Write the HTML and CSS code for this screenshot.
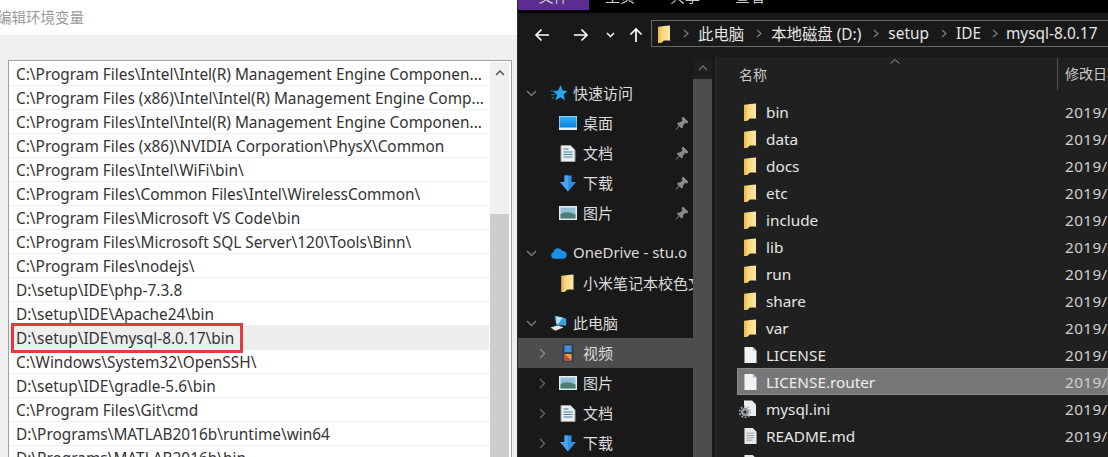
FILE: index.html
```html
<!DOCTYPE html>
<html lang="zh">
<head>
<meta charset="utf-8">
<title>编辑环境变量</title>
<link rel="stylesheet" href="styles.css">
</head>
<body>
<svg class="defs" width="0" height="0" aria-hidden="true">
  <defs>
    <linearGradient id="fg" x1="0" y1="0" x2="1" y2="0"><stop offset="0" stop-color="#f5cf66"/><stop offset="1" stop-color="#fce9b2"/></linearGradient>
    <linearGradient id="lg" x1="0" y1="0" x2="0" y2="1"><stop offset="0" stop-color="#2fb4f5"/><stop offset="1" stop-color="#0a7fe0"/></linearGradient>
    <symbol id="folder" viewBox="0 0 13 18"><path d="M0 2 L6 1 L12 0.5 V15 L13 15.5 H6 L3 18 H0 Z" fill="url(#fg)"/><path d="M0 2 L2.5 1.6 V18 H0 Z" fill="#eec04a"/></symbol>
    <symbol id="file" viewBox="0 0 14 18"><path d="M0.5 0.5 H9.5 L13.5 4.5 V17.5 H0.5 Z" fill="#f2f2f2"/><path d="M9.5 0.5 L13.5 4.5 H9.5 Z" fill="#c4c4c4"/></symbol>
    <symbol id="text" viewBox="0 0 14 18"><path d="M0.5 0.5 H9.5 L13.5 4.5 V17.5 H0.5 Z" fill="#e8e8e8"/><path d="M2.5 6 H11 M2.5 8.5 H11 M2.5 11 H11 M2.5 13.5 H9" stroke="#9a9a9a"/></symbol>
    <symbol id="ini" viewBox="0 0 18 18"><path d="M5 0.5 H13 L17 4.5 V16 H5 Z" fill="#ececec"/><circle cx="6" cy="12" r="4.2" fill="#8f969c"/><circle cx="6" cy="12" r="5.4" fill="none" stroke="#a9aeb2" stroke-width="1.6" stroke-dasharray="1.7 1.7"/><circle cx="6" cy="12" r="1.6" fill="#2a2a2a"/></symbol>
    <symbol id="pin" viewBox="0 0 14 14"><path d="M8 1 L13 6 L11.5 7 L10 6.5 L7.5 9.5 L7.5 11.5 L6.5 12 L2.5 8 L3 7 L5 7 L8 4.5 L7 3 Z M4 10 L1 13.5" fill="#8a8a8a" stroke="#8a8a8a"/></symbol>
    <symbol id="desk" viewBox="0 0 18 14"><rect width="18" height="14" fill="#e4eef5"/><rect x="0.5" y="0.5" width="17" height="11" fill="url(#lg)"/></symbol>
    <symbol id="doc" viewBox="0 0 15 17"><path d="M0.5 0.5 H10 L14.5 5 V16.5 H0.5 Z" fill="#ededed" stroke="#9aa4ab"/><path d="M3 4 H8 M3 7 H12 M3 9.5 H12 M3 12 H12" stroke="#3f7fa8"/></symbol>
    <symbol id="down" viewBox="0 0 17 17"><path d="M5 0.5 H12 V7 H16.5 L8.5 16.5 L0.5 7 H5 Z" fill="#2f8fe6"/><path d="M5 0.5 H8.5 V16.5 L0.5 7 H5 Z" fill="#4aa5f0"/></symbol>
    <symbol id="pic" viewBox="0 0 18 14"><rect width="18" height="14" fill="#e6ecf0"/><rect x="1.5" y="1.5" width="15" height="11" fill="#8fc0d8"/><path d="M1.5 8 Q8 4.5 16.5 8.5 V12.5 H1.5 Z" fill="#4f7f73"/></symbol>
    <symbol id="video" viewBox="0 0 12 18"><rect width="12" height="18" fill="#39424c"/><rect x="2.5" y="1.5" width="7" height="6.5" fill="#3f8fd8"/><rect x="2.5" y="10" width="7" height="6.5" fill="#e8a03a"/><path d="M2.5 10 L9.5 16.5 H2.5 Z" fill="#c8473f"/></symbol>
    <symbol id="star" viewBox="0 0 18 18"><path d="M10.5 1 L12.7 6.5 L17.5 7 L13.7 10.6 L15 16.5 L10.5 13.3 L5.5 16.5 L7 10.8 L3 7.3 L8.3 6.6 Z" fill="#2ba3ef"/><path d="M0.5 7 H5 M1 10.5 H4.5 M1.5 14 H4.5" stroke="#1c6fb5"/></symbol>
    <symbol id="cloud" viewBox="0 0 21 13"><path d="M4.5 12.5 A4 4 0 0 1 4 4.8 A5.6 5.6 0 0 1 14.5 3.6 A4.6 4.6 0 0 1 16.5 12.5 Z" fill="#1a8fe3"/></symbol>
    <symbol id="pc" viewBox="0 0 20 18"><path d="M5 1 L18 4 V12 L7 11 Z" fill="#3fa2e0"/><path d="M7 1.5 L14 3 L9 10 L7 9.5 Z" fill="#bfe3f5"/><path d="M0.5 14 L9 11.5 L15 14 L6 17.5 Z" fill="#dfe5ea"/></symbol>
  </defs>
</svg>

<main class="screen">
  <section class="editor">
    <h1 class="editor-title">编辑环境变量</h1>
    <div class="editor-body">
      <div class="path-box">
        <ul class="path-list">
          <li class="path-row">C:\Program Files\Intel\Intel(R) Management Engine Componen...</li>
          <li class="path-row">C:\Program Files (x86)\Intel\Intel(R) Management Engine Comp...</li>
          <li class="path-row">C:\Program Files\Intel\Intel(R) Management Engine Componen...</li>
          <li class="path-row">C:\Program Files (x86)\NVIDIA Corporation\PhysX\Common</li>
          <li class="path-row">C:\Program Files\Intel\WiFi\bin\</li>
          <li class="path-row">C:\Program Files\Common Files\Intel\WirelessCommon\</li>
          <li class="path-row">C:\Program Files\Microsoft VS Code\bin</li>
          <li class="path-row">C:\Program Files\Microsoft SQL Server\120\Tools\Binn\</li>
          <li class="path-row">C:\Program Files\nodejs\</li>
          <li class="path-row">D:\setup\IDE\php-7.3.8</li>
          <li class="path-row">D:\setup\IDE\Apache24\bin</li>
          <li class="path-row is-selected">D:\setup\IDE\mysql-8.0.17\bin<span class="red-mark"></span></li>
          <li class="path-row">C:\Windows\System32\OpenSSH\</li>
          <li class="path-row">D:\setup\IDE\gradle-5.6\bin</li>
          <li class="path-row">C:\Program Files\Git\cmd</li>
          <li class="path-row">D:\Programs\MATLAB2016b\runtime\win64</li>
          <li class="path-row">D:\Programs\MATLAB2016b\bin</li>
        </ul>
        <div class="list-scroll">
          <svg class="list-up" width="10" height="6" viewBox="0 0 10 6"><path d="M1 5 L5 1 L9 5" fill="none" stroke="#555" stroke-width="1.5"/></svg>
          <div class="list-thumb"></div>
        </div>
      </div>
    </div>
  </section>

  <section class="explorer">
    <div class="ribbon">
      <span class="tab tab-file">文件</span>
      <span class="tab tab-home">主页</span>
      <span class="tab tab-share">共享</span>
      <span class="tab tab-view">查看</span>
    </div>
    <div class="toolbar">
      <svg class="nav-back" width="16" height="14" viewBox="0 0 16 14"><path d="M15 7 H2 M7.5 1.5 L2 7 L7.5 12.5" fill="none" stroke="#fff" stroke-width="1.7"/></svg>
      <svg class="nav-fwd" width="16" height="14" viewBox="0 0 16 14"><path d="M1 7 H14 M8.5 1.5 L14 7 L8.5 12.5" fill="none" stroke="#fff" stroke-width="1.7"/></svg>
      <svg class="nav-drop" width="9" height="6" viewBox="0 0 9 6"><path d="M1 1 L4.5 4.5 L8 1" fill="none" stroke="#eee" stroke-width="1.6"/></svg>
      <svg class="nav-up" width="14" height="16" viewBox="0 0 14 16"><path d="M7 15 V2 M1.5 7.5 L7 2 L12.5 7.5" fill="none" stroke="#fff" stroke-width="1.7"/></svg>
      <div class="address">
        <svg class="addr-folder" width="13" height="18"><use href="#folder"/></svg>
        <svg class="crumb-sep" width="6" height="9" viewBox="0 0 6 9"><path d="M1 1 L5 4.5 L1 8" fill="none" stroke="#777" stroke-width="1.4"/></svg>
        <span class="crumb">此电脑</span>
        <svg class="crumb-sep" width="6" height="9" viewBox="0 0 6 9"><path d="M1 1 L5 4.5 L1 8" fill="none" stroke="#777" stroke-width="1.4"/></svg>
        <span class="crumb">本地磁盘 (D:)</span>
        <svg class="crumb-sep" width="6" height="9" viewBox="0 0 6 9"><path d="M1 1 L5 4.5 L1 8" fill="none" stroke="#777" stroke-width="1.4"/></svg>
        <span class="crumb">setup</span>
        <svg class="crumb-sep" width="6" height="9" viewBox="0 0 6 9"><path d="M1 1 L5 4.5 L1 8" fill="none" stroke="#777" stroke-width="1.4"/></svg>
        <span class="crumb">IDE</span>
        <svg class="crumb-sep crumb-sep-last" width="6" height="9" viewBox="0 0 6 9"><path d="M1 1 L5 4.5 L1 8" fill="none" stroke="#777" stroke-width="1.4"/></svg>
        <span class="crumb">mysql-8.0.17</span>
      </div>
    </div>
    <div class="panes">
      <nav class="tree">
        <div class="tree-row top"><svg class="tw" width="11" height="7" viewBox="0 0 11 7"><path d="M1 1 L5.5 5.5 L10 1" fill="none" stroke="#777" stroke-width="1.5"/></svg><svg class="ti" width="18" height="18"><use href="#star"/></svg><span>快速访问</span></div>
        <div class="tree-row child"><svg class="ti" width="18" height="14"><use href="#desk"/></svg><span>桌面</span><svg class="pin" width="14" height="14"><use href="#pin"/></svg></div>
        <div class="tree-row child"><svg class="ti" width="18" height="17"><use href="#doc"/></svg><span>文档</span><svg class="pin" width="14" height="14"><use href="#pin"/></svg></div>
        <div class="tree-row child"><svg class="ti" width="18" height="17"><use href="#down"/></svg><span>下载</span><svg class="pin" width="14" height="14"><use href="#pin"/></svg></div>
        <div class="tree-row child"><svg class="ti" width="18" height="14"><use href="#pic"/></svg><span>图片</span><svg class="pin" width="14" height="14"><use href="#pin"/></svg></div>
        <div class="tree-row top gap"><svg class="tw" width="11" height="7" viewBox="0 0 11 7"><path d="M1 1 L5.5 5.5 L10 1" fill="none" stroke="#777" stroke-width="1.5"/></svg><svg class="ti" width="21" height="13"><use href="#cloud"/></svg><span>OneDrive - stu.o</span></div>
        <div class="tree-row child"><svg class="ti" width="18" height="18"><use href="#folder"/></svg><span>小米笔记本校色文件</span></div>
        <div class="tree-row top gap"><svg class="tw" width="11" height="7" viewBox="0 0 11 7"><path d="M1 1 L5.5 5.5 L10 1" fill="none" stroke="#777" stroke-width="1.5"/></svg><svg class="ti" width="20" height="18"><use href="#pc"/></svg><span>此电脑</span></div>
        <div class="tree-row child has-arrow is-active"><svg class="tw" width="7" height="11" viewBox="0 0 7 11"><path d="M1 1 L5.5 5.5 L1 10" fill="none" stroke="#8a8a8a" stroke-width="1.4"/></svg><svg class="ti" width="18" height="18"><use href="#video"/></svg><span>视频</span></div>
        <div class="tree-row child has-arrow"><svg class="tw" width="7" height="11" viewBox="0 0 7 11"><path d="M1 1 L5.5 5.5 L1 10" fill="none" stroke="#666" stroke-width="1.4"/></svg><svg class="ti" width="18" height="14"><use href="#pic"/></svg><span>图片</span></div>
        <div class="tree-row child has-arrow"><svg class="tw" width="7" height="11" viewBox="0 0 7 11"><path d="M1 1 L5.5 5.5 L1 10" fill="none" stroke="#666" stroke-width="1.4"/></svg><svg class="ti" width="18" height="17"><use href="#doc"/></svg><span>文档</span></div>
        <div class="tree-row child has-arrow"><svg class="tw" width="7" height="11" viewBox="0 0 7 11"><path d="M1 1 L5.5 5.5 L1 10" fill="none" stroke="#666" stroke-width="1.4"/></svg><svg class="ti" width="18" height="17"><use href="#down"/></svg><span>下载</span></div>
      </nav>
      <div class="tree-scroll">
        <svg class="tree-up" width="10" height="6" viewBox="0 0 10 6"><path d="M1 5 L5 1 L9 5" fill="none" stroke="#666" stroke-width="1.6"/></svg>
        <div class="tree-thumb"></div>
      </div>
      <div class="files">
        <div class="file-head">
          <span class="col-name">名称</span>
          <svg class="sort" width="10" height="5" viewBox="0 0 10 5"><path d="M0.5 4.5 L5 0.5 L9.5 4.5" fill="none" stroke="#999"/></svg>
          <span class="col-date">修改日期</span>
        </div>
        <div class="file-row"><svg class="fi" width="13" height="18"><use href="#folder"/></svg><span class="fn">bin</span><span class="fd">2019/7/21</span></div>
        <div class="file-row"><svg class="fi" width="13" height="18"><use href="#folder"/></svg><span class="fn">data</span><span class="fd">2019/7/21</span></div>
        <div class="file-row"><svg class="fi" width="13" height="18"><use href="#folder"/></svg><span class="fn">docs</span><span class="fd">2019/7/21</span></div>
        <div class="file-row"><svg class="fi" width="13" height="18"><use href="#folder"/></svg><span class="fn">etc</span><span class="fd">2019/7/21</span></div>
        <div class="file-row"><svg class="fi" width="13" height="18"><use href="#folder"/></svg><span class="fn">include</span><span class="fd">2019/7/21</span></div>
        <div class="file-row"><svg class="fi" width="13" height="18"><use href="#folder"/></svg><span class="fn">lib</span><span class="fd">2019/7/21</span></div>
        <div class="file-row"><svg class="fi" width="13" height="18"><use href="#folder"/></svg><span class="fn">run</span><span class="fd">2019/7/21</span></div>
        <div class="file-row"><svg class="fi" width="13" height="18"><use href="#folder"/></svg><span class="fn">share</span><span class="fd">2019/7/21</span></div>
        <div class="file-row"><svg class="fi" width="13" height="18"><use href="#folder"/></svg><span class="fn">var</span><span class="fd">2019/7/21</span></div>
        <div class="file-row"><svg class="fi" width="13" height="18"><use href="#file"/></svg><span class="fn">LICENSE</span><span class="fd">2019/6/27</span></div>
        <div class="file-row is-selected"><svg class="fi" width="13" height="18"><use href="#file"/></svg><span class="fn">LICENSE.router</span><span class="fd">2019/6/27</span></div>
        <div class="file-row"><svg class="fi fi-ini" width="18" height="18"><use href="#ini"/></svg><span class="fn">mysql.ini</span><span class="fd">2019/7/21</span></div>
        <div class="file-row"><svg class="fi" width="13" height="18"><use href="#text"/></svg><span class="fn">README.md</span><span class="fd">2019/6/27</span></div>
        <div class="file-row"><svg class="fi" width="13" height="18"><use href="#text"/></svg><span class="fn">README.router</span><span class="fd">2019/6/27</span></div>
      </div>
    </div>
  </section>
</main>
</body>
</html>
```
FILE: styles.css
```css
* { box-sizing: border-box; }
html, body { margin: 0; padding: 0; height: 100%; overflow: hidden; }
body { font-family: "Noto Sans", "Noto Sans CJK SC", sans-serif; font-size: 15px; background: #fff; }
.defs { position: absolute; }
ul { list-style: none; margin: 0; padding: 0; }

.screen { display: flex; width: 1108px; height: 457px; overflow: hidden; }

/* left dialog */
.editor { width: 517px; flex: none; display: flex; flex-direction: column; background: #fff; }
.editor-title { height: 35px; margin: 0 0 0 -3px; font-size: 14.5px; font-weight: 400; line-height: 33px; color: #9a9a9a; font-family: "Noto Sans CJK SC", sans-serif; white-space: nowrap; }
.editor-body { flex: 1; background: #f0f0f0; padding: 25px 5px 0 8px; min-height: 0; }
.path-box { display: flex; height: 420px; background: #fff; border: 1px solid #a0a0a0; padding-top: 1px; overflow: hidden; }
.path-list { width: 480px; flex: none; }
.path-row { position: relative; height: 24px; padding: 1px 0 0 7px; font-size: 15.4px; line-height: 23px; color: #333; border-bottom: 1px solid #f0f0f0; white-space: nowrap; }
.path-row.is-selected { background: #eee; }
.red-mark { position: absolute; left: 2px; top: -3px; width: 232px; height: 30px; border: 3px solid #e23b3b; }
.list-scroll { width: 19px; margin-left: 1px; background: #f0f0f0; display: flex; flex-direction: column; align-items: center; }
.list-up { margin: 8px 0 0; flex: none; }
.list-thumb { margin-top: 138px; width: 100%; flex: 1; background: #cdcdcd; }

/* right explorer */
.explorer { flex: 1; min-width: 0; display: flex; flex-direction: column; background: #191919; color: #ddd; border-left: 1px solid #2c2c38; }
.ribbon { height: 13px; background: #000; display: flex; overflow: hidden; flex: none; font-size: 15px; font-family: "Noto Sans CJK SC", sans-serif; }
.tab { display: block; line-height: 20px; height: 20px; flex: none; margin-top: -14px; color: #ccc; }
.tab-file { width: 71px; height: 24px; background: #5c2d91; text-align: center; }
.tab-home { margin-left: 16px; }
.tab-share { margin-left: 35px; }
.tab-view { margin-left: 35px; }
.toolbar { height: 44px; flex: none; display: flex; align-items: center; padding: 0 0 0 16px; }
.nav-fwd { margin-left: 23px; }
.nav-drop { margin-left: 17px; }
.nav-up { margin-left: 14px; }
.address { margin-left: 8px; flex: 1; height: 27px; margin-top: -3px; border: 1px solid #666; border-right: 0; display: flex; align-items: center; padding-left: 6px; font-size: 15.4px; white-space: nowrap; }
.addr-folder { flex: none; }
.crumb-sep { flex: none; margin: 0 9px 0 12px; }
.crumb-sep-last { margin-right: 8px; margin-left: 11px; }
.crumb { color: #e6e6e6; }

.panes { flex: 1; display: flex; min-height: 0; }
.tree { width: 175px; flex: none; padding-top: 21px; overflow: hidden; }
.tree-row { position: relative; display: flex; align-items: center; height: 30px; white-space: nowrap; overflow: hidden; font-size: 15px; color: #dcdcdc; }
.tree-row span { margin-top: -2px; }
.tree-row.gap { margin-top: 10px; }
.tree-row.top { padding-left: 8px; }
.tree-row.top .tw { flex: none; margin-right: 13px; }
.tree-row.top .ti { flex: none; margin-right: 5px; width: 18px; }
.tree-row.child { padding-left: 41px; }
.tree-row.child .ti { flex: none; margin-right: 6px; }
.tree-row.child.has-arrow { padding-left: 21px; }
.tree-row.child.has-arrow .tw { flex: none; margin-right: 13px; }
.tree-row.is-active { background: #4d4d4d; }
.pin { position: absolute; left: 157px; top: 8px; }
.tree-scroll { width: 19px; flex: none; display: flex; flex-direction: column; align-items: center; background: #1e1e1e; }
.tree-up { margin-top: 8px; flex: none; }
.tree-thumb { margin-top: 8px; width: 100%; flex: 1; background: #4d4d4d; }

.files { flex: 1; min-width: 0; margin-left: 3px; background: #202020; overflow: hidden; padding-left: 21px; border-left: 1px solid #2a2a2a; }
.file-head { position: relative; height: 41px; display: flex; align-items: center; padding: 0 0 8px 2px; color: #c8c8c8; font-size: 14px; font-family: "Noto Sans CJK SC", sans-serif; }
.sort { position: absolute; left: 153px; top: 2px; }
.col-date { position: absolute; left: 320px; top: 1px; bottom: 8px; padding-left: 7px; line-height: 31px; border-left: 1px solid #555; white-space: nowrap; }
.file-row { position: relative; height: 27px; display: flex; align-items: center; padding-left: 7px; white-space: nowrap; color: #e6e6e6; font-size: 15.3px; }
.file-row.is-selected { background: #777; outline: 1px solid #8a8a8a; outline-offset: -1px; color: #eee; }
.fi { flex: none; margin-right: 9px; }
.fi-ini { margin-left: -5px; margin-right: 9px; }
.fn { width: 299px; flex: none; }
.fd { color: #cfcfcf; letter-spacing: 0.4px; }
```
